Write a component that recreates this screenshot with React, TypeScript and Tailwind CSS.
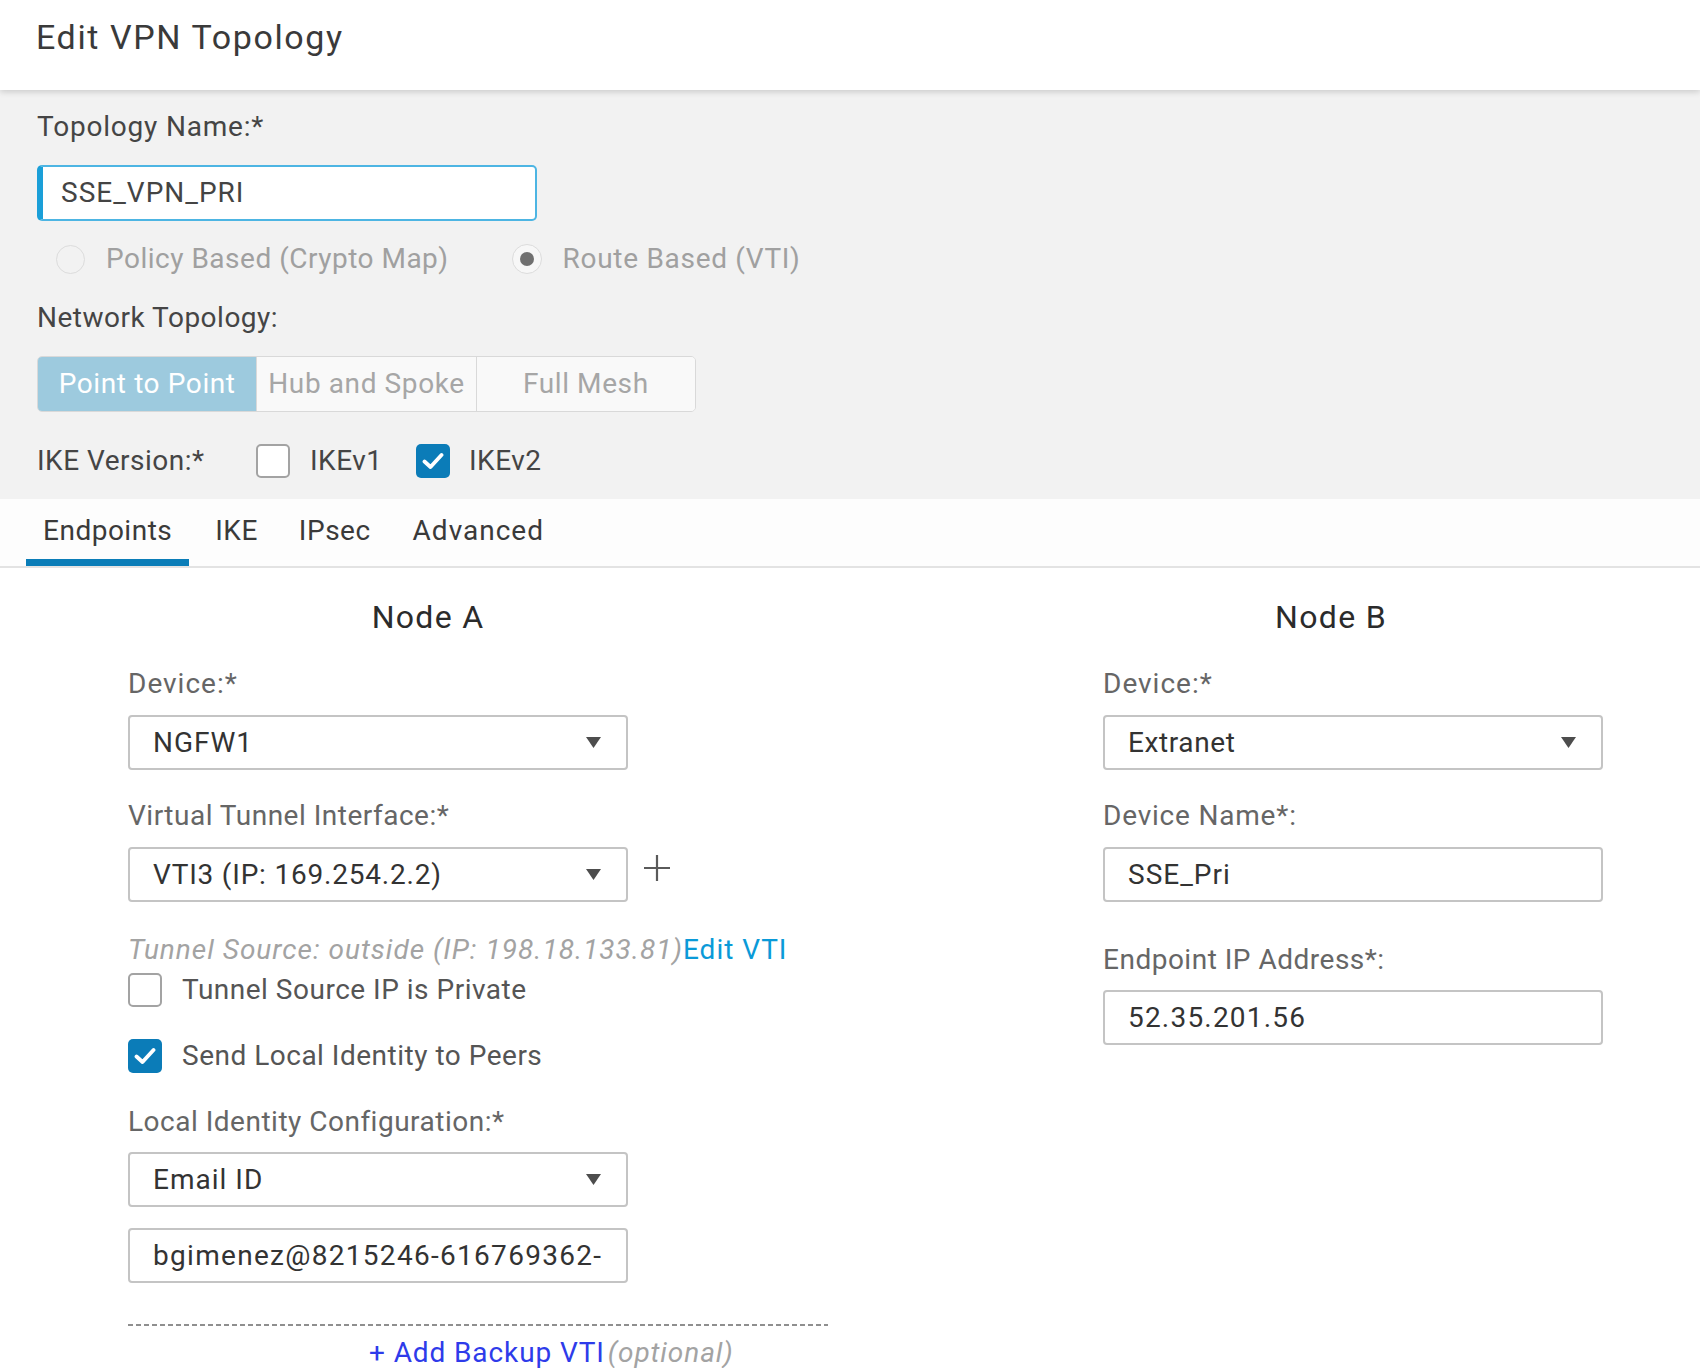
import React from "react";

function Arrow() {
  return (
    <svg width="15" height="11" viewBox="0 0 15 11" className="shrink-0">
      <polygon points="0,0 15,0 7.5,11" fill="#4d4d4d" />
    </svg>
  );
}

function Select({ value, track = "tracking-[1px]" }: { value: string; track?: string }) {
  return (
    <div className={`flex h-[55px] w-[500px] items-center justify-between rounded-[4px] border-[2px] border-[#c4c4c4] bg-white pl-[23px] pr-[25px] text-[28px] leading-[32px] text-[#333333] ${track}`}>
      <span>{value}</span>
      <Arrow />
    </div>
  );
}

function TextInput({ value, track = "tracking-[1px]" }: { value: string; track?: string }) {
  return (
    <div className={`flex h-[55px] w-[500px] items-center overflow-hidden whitespace-nowrap rounded-[4px] border-[2px] border-[#c4c4c4] bg-white pl-[23px] text-[28px] leading-[32px] text-[#333333] ${track}`}>
      {value}
    </div>
  );
}

function Checkbox({ checked }: { checked: boolean }) {
  if (checked) {
    return (
      <div className="flex h-[34px] w-[34px] shrink-0 items-center justify-center rounded-[5px] bg-[#0b7cb8]">
        <svg width="22" height="18" viewBox="0 0 22 18">
          <path d="M2.5 9.5 L8.5 15 L19.5 3" fill="none" stroke="#ffffff" strokeWidth="3.8" strokeLinecap="round" strokeLinejoin="round" />
        </svg>
      </div>
    );
  }
  return <div className="h-[34px] w-[34px] shrink-0 rounded-[5px] border-[2px] border-[#a3a3a3] bg-white" />;
}

export default function App() {
  return (
    <div className="min-h-[1368px] w-full bg-white font-[Roboto,'Liberation_Sans',sans-serif] tracking-[0.5px]">
      {/* header */}
      <div className="relative z-10 h-[90px] bg-white px-[36px] pt-[17px] shadow-[0_2px_6px_rgba(0,0,0,0.16)]">
        <h1 className="text-[34px] leading-[40px] tracking-[1.6px] text-[#3a3a3a]">Edit VPN Topology</h1>
      </div>

      {/* topology settings */}
      <div className="bg-[#f2f2f2] px-[37px] pt-[21px] pb-[20px]">
        <div className="text-[28px] leading-[32px] tracking-[0.8px] text-[#454545]">Topology Name:*</div>
        <div className="mt-[22px] flex h-[56px] w-[500px] items-center rounded-[5px] border-[2px] border-l-[6px] border-[#4db5e3] border-l-[#1a9fd8] bg-white pl-[18px] text-[28px] leading-[32px] tracking-[1px] text-[#444444]">
          SSE_VPN_PRI
        </div>

        <div className="mt-[22px] flex h-[32px] items-center pl-[19px] text-[28px] leading-[32px] text-[#a0a0a0]">
          <div className="h-[29px] w-[29px] rounded-full border border-[#dcdcdc]" />
          <span className="ml-[21px]">Policy Based (Crypto Map)</span>
          <div className="ml-[63px] flex h-[30px] w-[30px] items-center justify-center rounded-full border border-[#dcdcdc] bg-[#f7f7f7]">
            <div className="h-[14px] w-[14px] rounded-full bg-[#707070]" />
          </div>
          <span className="ml-[21px] tracking-[0.7px]">Route Based (VTI)</span>
        </div>

        <div className="mt-[27px] text-[28px] leading-[32px] text-[#454545]">Network Topology:</div>
        <div className="mt-[22px] flex h-[56px] w-[659px] overflow-hidden rounded-[5px] border border-[#d9d9d9] text-[28px] leading-[32px] tracking-[0.6px]">
          <div className="flex w-[219px] items-center justify-center bg-[#9dcade] text-white">Point to Point</div>
          <div className="flex w-[220px] items-center justify-center border-l border-[#d9d9d9] bg-[#f9f9f9] text-[#a6a6a6]">Hub and Spoke</div>
          <div className="flex w-[220px] items-center justify-center border-l border-[#d9d9d9] bg-[#f9f9f9] text-[#a6a6a6]">Full Mesh</div>
        </div>

        <div className="mt-[31px] flex h-[36px] items-center text-[28px] leading-[32px] text-[#454545]">
          <span className="w-[219px]">IKE Version:*</span>
          <Checkbox checked={false} />
          <span className="ml-[20px] w-[106px]">IKEv1</span>
          <Checkbox checked />
          <span className="ml-[19px]">IKEv2</span>
        </div>
      </div>

      {/* tabs */}
      <div className="flex border-b-[2px] border-[#e3e3e3] bg-[#fdfdfd] pl-[26px] text-[28px] leading-[32px] text-[#3a3a3a]">
        <div className="border-b-[7px] border-[#0a7db8] px-[17px] pt-[16px] pb-[12px]">Endpoints</div>
        <div className="ml-[9px] border-b-[7px] border-transparent px-[17px] pt-[16px] pb-[12px]">IKE</div>
        <div className="ml-[7px] border-b-[7px] border-transparent px-[17px] pt-[16px] pb-[12px]">IPsec</div>
        <div className="ml-[8px] border-b-[7px] border-transparent px-[17px] pt-[16px] pb-[12px] tracking-[1px]">Advanced</div>
      </div>

      {/* endpoints */}
      <div className="flex pl-[128px]">
        {/* node A */}
        <div className="w-[700px]">
          <div className="mt-[30px] w-[600px] text-center text-[32px] leading-[38px] tracking-[1.3px] text-[#2b2b2b]">Node A</div>
          <div className="mt-[32px] text-[28px] leading-[32px] tracking-[1px] text-[#666666]">Device:*</div>
          <div className="mt-[15px]">
            <Select value="NGFW1" />
          </div>
          <div className="mt-[30px] text-[28px] leading-[32px] text-[#666666]">Virtual Tunnel Interface:*</div>
          <div className="mt-[15px] flex items-start">
            <Select value="VTI3 (IP: 169.254.2.2)" track="tracking-[0.8px]" />
            <svg width="28" height="28" viewBox="0 0 28 28" className="ml-[15px] mt-[7px]">
              <path d="M14 1 V27 M1 14 H27" stroke="#5a5a5a" strokeWidth="2.2" />
            </svg>
          </div>
          <div className="mt-[32px] text-[28px] leading-[32px] tracking-[1px]">
            <span className="italic text-[#a3a3a3]">Tunnel Source: outside (IP: 198.18.133.81)</span>
            <span className="text-[#0a9ad8]">Edit VTI</span>
          </div>
          <div className="mt-[7px] flex h-[34px] items-center text-[28px] leading-[32px] text-[#555555]">
            <Checkbox checked={false} />
            <span className="ml-[20px]">Tunnel Source IP is Private</span>
          </div>
          <div className="mt-[32px] flex h-[34px] items-center text-[28px] leading-[32px] text-[#555555]">
            <Checkbox checked />
            <span className="ml-[20px]">Send Local Identity to Peers</span>
          </div>
          <div className="mt-[33px] text-[28px] leading-[32px] text-[#666666]">Local Identity Configuration:*</div>
          <div className="mt-[14px]">
            <Select value="Email ID" />
          </div>
          <div className="mt-[21px]">
            <TextInput value="bgimenez@8215246-616769362-" track="tracking-[1.3px]" />
          </div>
          <div className="mt-[41px] h-[2px] w-[700px] bg-[repeating-linear-gradient(90deg,#8f8f8f_0px,#8f8f8f_5px,transparent_5px,transparent_8px)]" />
          <div className="mt-[11px] pl-[241px] text-[28px] leading-[32px] tracking-[0.9px]">
            <span className="text-[#2e3bea]">+ Add Backup VTI</span>
            <span className="ml-[3px] italic text-[#a3a3a3]">(optional)</span>
          </div>
        </div>

        {/* node B */}
        <div className="ml-[275px] w-[500px]">
          <div className="mt-[30px] pr-[44px] text-center text-[32px] leading-[38px] tracking-[1.3px] text-[#2b2b2b]">Node B</div>
          <div className="mt-[32px] text-[28px] leading-[32px] tracking-[1px] text-[#666666]">Device:*</div>
          <div className="mt-[15px]">
            <Select value="Extranet" track="tracking-[0.6px]" />
          </div>
          <div className="mt-[30px] text-[28px] leading-[32px] tracking-[0.8px] text-[#666666]">Device Name*:</div>
          <div className="mt-[15px]">
            <TextInput value="SSE_Pri" />
          </div>
          <div className="mt-[42px] text-[28px] leading-[32px] text-[#666666]">Endpoint IP Address*:</div>
          <div className="mt-[14px]">
            <TextInput value="52.35.201.56" track="tracking-[1.2px]" />
          </div>
        </div>
      </div>
    </div>
  );
}
